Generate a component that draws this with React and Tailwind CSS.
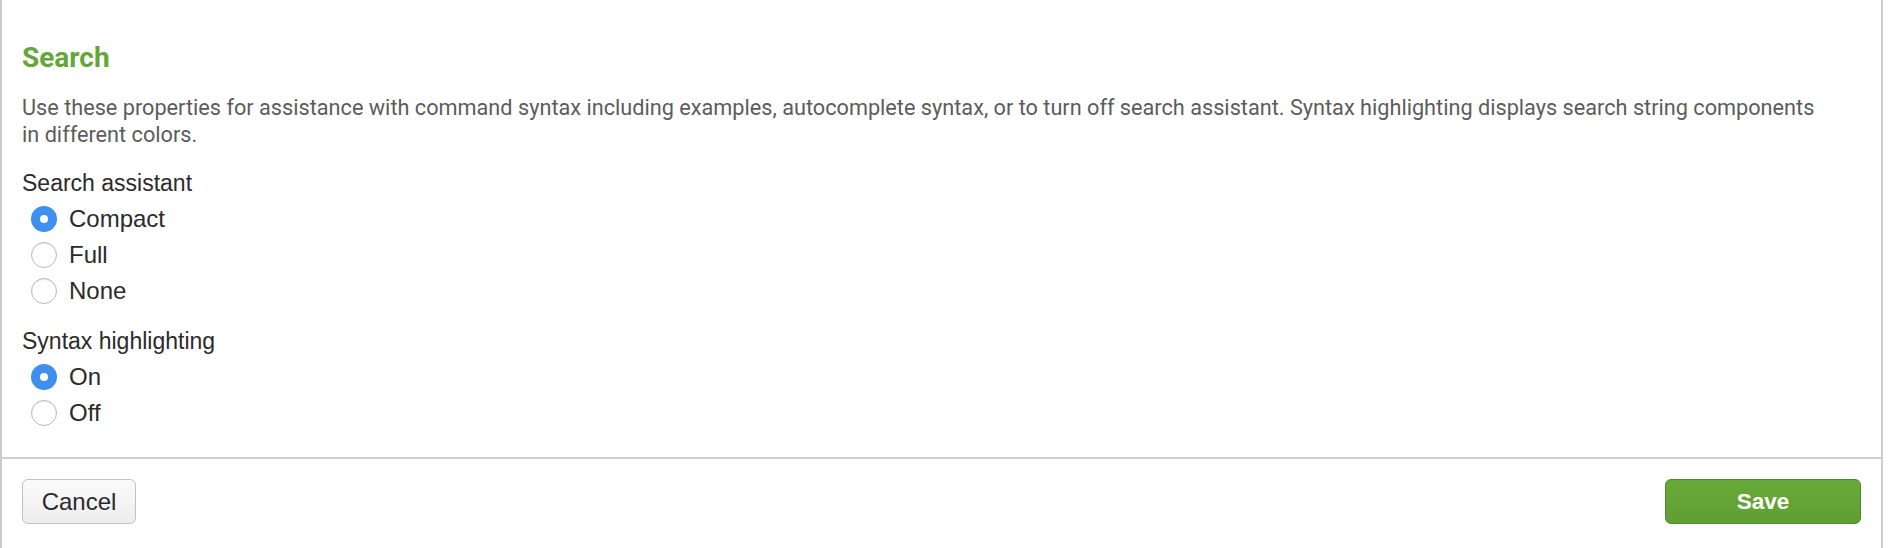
import { useState } from "react";

const SANS = "font-['Liberation_Sans',Arial,sans-serif]";
const ROBOTO = "font-['Roboto','Noto_Sans',sans-serif]";

function Radio({ label, checked, onChange }) {
  return (
    <label className="flex h-[36px] cursor-pointer items-center gap-[12px] pl-[9px]" onClick={onChange}>
      {checked ? (
        <span className="flex h-[26px] w-[26px] items-center justify-center rounded-full bg-[#3d8ff0]">
          <span className="h-[8px] w-[8px] rounded-full bg-white" />
        </span>
      ) : (
        <span className="h-[26px] w-[26px] rounded-full border border-[#b9b9b9] bg-white shadow-[inset_0_1px_1px_rgba(0,0,0,0.08)]" />
      )}
      <span className="text-[24px] text-[#2b2b2b]">{label}</span>
    </label>
  );
}

function RadioGroup({ title, options, value, onChange, className = "" }) {
  return (
    <div className={className}>
      <div className="flex h-[36px] items-center text-[23px] text-[#2b2b2b]">{title}</div>
      {options.map((o) => (
        <Radio key={o} label={o} checked={value === o} onChange={() => onChange(o)} />
      ))}
    </div>
  );
}

export default function App() {
  const [assistant, setAssistant] = useState("Compact");
  const [syntax, setSyntax] = useState("On");

  return (
    <div className={`flex h-[548px] w-[1883px] flex-col border-x-2 border-[#cccccc] bg-white ${SANS}`}>
      {/* Body */}
      <div className="px-[20px] pt-[41px] pb-[26px]">
        <h2 className={`text-[28px] leading-[33px] font-bold text-[#65a637] ${ROBOTO}`}>Search</h2>
        <p className={`mt-[20px] pr-[30px] text-[21.7px] leading-[27px] text-[#5c5c5c] ${ROBOTO}`}>
          Use these properties for assistance with command syntax including examples, autocomplete syntax, or to turn off search assistant. Syntax highlighting displays search string components in different colors.
        </p>

        <RadioGroup
          className="mt-[17px]"
          title="Search assistant"
          options={["Compact", "Full", "None"]}
          value={assistant}
          onChange={setAssistant}
        />
        <RadioGroup
          className="mt-[14px]"
          title="Syntax highlighting"
          options={["On", "Off"]}
          value={syntax}
          onChange={setSyntax}
        />
      </div>

      {/* Footer */}
      <div className="flex items-center justify-between border-t-2 border-[#cfcfcf] px-[20px] pt-[20px]">
        <button className="h-[45px] w-[114px] rounded-[6px] border border-[#c2c2c2] bg-gradient-to-b from-[#fbfbfb] to-[#ededed] text-[24px] text-[#2b2b2b]">
          Cancel
        </button>
        <button className="h-[45px] w-[196px] rounded-[6px] border border-[#4d8a2a] bg-gradient-to-b from-[#68aa39] to-[#5f9f33] text-[22.5px] font-bold text-white">
          Save
        </button>
      </div>
    </div>
  );
}
